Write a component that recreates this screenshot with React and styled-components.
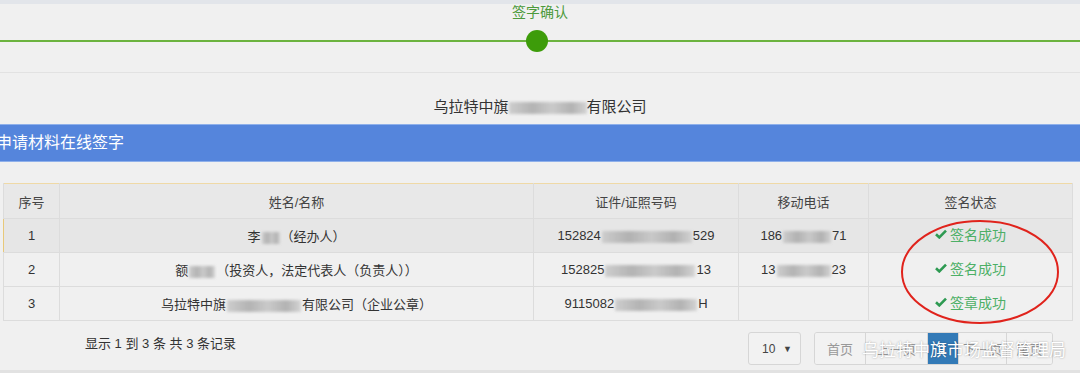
import React from "react";
import styled, { createGlobalStyle } from "styled-components";

const Global = createGlobalStyle`
  html, body { margin: 0; padding: 0; background: #f0f0f0; }
  body {
    font-family: "Liberation Sans", "Noto Sans CJK SC", sans-serif;
    color: #333;
    overflow: hidden;
  }
`;

const Page = styled.div`
  position: relative;
  width: 1080px;
  height: 373px;
  background: #f0f0f0;
  overflow: hidden;
`;

const TopStrip = styled.div`
  height: 4px;
  background: #e2e5ea;
`;

const Steps = styled.div`
  height: 68px;
  border-bottom: 1px solid #e2e2e2;
  display: flex;
  flex-direction: column;
  align-items: center;
`;

const StepLabel = styled.div`
  margin-top: -1px;
  font-size: 14px;
  line-height: 18px;
  color: #4c9a3c;
`;

const Track = styled.div`
  position: relative;
  width: 100%;
  height: 24px;
  margin-top: 8px;
  display: flex;
  align-items: center;
  justify-content: center;
  &::before {
    content: "";
    position: absolute;
    left: 0;
    right: 0;
    top: 11px;
    height: 2px;
    background: #6cb33f;
  }
`;

const Dot = styled.div`
  position: relative;
  width: 22px;
  height: 22px;
  margin-left: -6px;
  border-radius: 50%;
  background: #3d9c0a;
`;

const Company = styled.div`
  height: 51px;
  box-sizing: border-box;
  padding-top: 24px;
  text-align: center;
  font-size: 15px;
  line-height: 20px;
  color: #333;
`;

const Bar = styled.div`
  height: 38px;
  box-sizing: border-box;
  background: #5585dc;
  border-top: 1px solid #8fb0ea;
  border-bottom: 1px solid #8fb0ea;
  color: #fff;
  font-size: 16px;
  line-height: 36px;
  text-indent: -4px;
`;

const TableWrap = styled.div`
  padding: 21px 8px 0 3px;
`;

const Table = styled.table`
  width: 1069px;
  border-collapse: collapse;
  table-layout: fixed;
  font-size: 13px;
  border-top: 1px solid #efd9a6;
`;

const Th = styled.th`
  font-weight: normal;
  height: 34px;
  padding: 0;
  background: #e8e8e8;
  border: 1px solid #dcdcdc;
  border-top: none;
  color: #444;
  text-align: center;
`;

const Row = styled.tr`
  background: ${p => (p.$hover ? "#e6e6e6" : "#f0f0f0")};
  td:first-child {
    border-left: 1px solid ${p => (p.$hover ? "#e8c97a" : "#dcdcdc")};
  }
`;

const Td = styled.td`
  height: 33px;
  padding: 0;
  border: 1px solid #dcdcdc;
  text-align: center;
  color: #333;
  white-space: nowrap;
`;

const Redact = styled.span`
  display: inline-block;
  vertical-align: middle;
  width: ${p => p.$w}px;
  height: 12px;
  margin: 0 ${p => p.$m ?? 1}px;
  background: linear-gradient(90deg, #c8c8c8, #a9a9a9 30%, #c4c4c4 55%, #a8a8a8 80%, #cfcfcf);
  filter: blur(1.5px);
  opacity: 0.85;
`;

const Status = styled.span`
  color: #4caf66;
  font-size: 14px;
  display: inline-flex;
  align-items: center;
  gap: 3px;
  margin-top: -3px;
`;

const Check = () => (
  <svg width="12" height="10" viewBox="0 0 12 10">
    <path d="M1 5.2 L4.3 8.4 L11 1.6" fill="none" stroke="#2e9a52" strokeWidth="2.6" />
  </svg>
);

const Footer = styled.div`
  display: flex;
  align-items: center;
  padding: 11px 0 0 85px;
`;

const Info = styled.div`
  font-size: 13px;
  color: #333;
  margin-top: -12px;
  flex: 1;
`;

const Select = styled.div`
  width: 53px;
  height: 33px;
  box-sizing: border-box;
  border: 1px solid #d6d6d6;
  border-radius: 3px;
  display: flex;
  align-items: center;
  justify-content: space-between;
  padding: 0 8px 0 13px;
  font-size: 12px;
  color: #444;
  margin-right: 13px;
  background: #f2f2f2;
`;

const Pager = styled.div`
  display: flex;
  margin-right: 27px;
  border: 1px solid #d6d6d6;
  border-radius: 3px;
  overflow: hidden;
`;

const PageBtn = styled.div`
  width: ${p => p.$w}px;
  height: 31px;
  box-sizing: border-box;
  border-left: ${p => (p.$first ? "none" : "1px solid #d6d6d6")};
  display: flex;
  align-items: center;
  justify-content: center;
  font-size: 13px;
  color: ${p => (p.$active ? "#fff" : "#999")};
  background: ${p => (p.$active ? "#337ab7" : "#f2f2f2")};
`;

const Watermark = styled.div`
  position: absolute;
  left: 862px;
  top: 340px;
  font-size: 17px;
  line-height: 22px;
  color: #fff;
  text-shadow: 0 0 2px rgba(0, 0, 0, 0.35);
`;

const Circle = styled.svg`
  position: absolute;
  left: 898px;
  top: 217px;
`;

const BottomLine = styled.div`
  position: absolute;
  left: 0;
  right: 0;
  bottom: 0;
  height: 3px;
  background: #e2e2e2;
`;

const rows = [
  { no: 1, name: <>李<Redact $w={18} />（经办人）</>, id: <>152824<Redact $w={90} />529</>, phone: <>186<Redact $w={48} />71</>, status: "签名成功", hover: true },
  { no: 2, name: <>额<Redact $w={26} />（投资人，法定代表人（负责人））</>, id: <>152825<Redact $w={90} />13</>, phone: <>13<Redact $w={54} />23</>, status: "签名成功" },
  { no: 3, name: <>乌拉特中旗<Redact $w={74} />有限公司（企业公章）</>, id: <>9115082<Redact $w={82} />H</>, phone: null, status: "签章成功" },
];

export default function App() {
  return (
    <Page>
      <Global />
      <TopStrip />
      <Steps>
        <StepLabel>签字确认</StepLabel>
        <Track>
          <Dot />
        </Track>
      </Steps>
      <Company>乌拉特中旗<Redact $w={78} $m={0} />有限公司</Company>
      <Bar>申请材料在线签字</Bar>
      <TableWrap>
        <Table>
          <colgroup>
            <col style={{ width: 56 }} />
            <col style={{ width: 474 }} />
            <col style={{ width: 205 }} />
            <col style={{ width: 130 }} />
            <col style={{ width: 204 }} />
          </colgroup>
          <thead>
            <tr>
              <Th>序号</Th>
              <Th>姓名/名称</Th>
              <Th>证件/证照号码</Th>
              <Th>移动电话</Th>
              <Th>签名状态</Th>
            </tr>
          </thead>
          <tbody>
            {rows.map(r => (
              <Row key={r.no} $hover={r.hover}>
                <Td>{r.no}</Td>
                <Td>{r.name}</Td>
                <Td>{r.id}</Td>
                <Td>{r.phone}</Td>
                <Td>
                  <Status><Check />{r.status}</Status>
                </Td>
              </Row>
            ))}
          </tbody>
        </Table>
      </TableWrap>
      <Footer>
        <Info>显示 1 到 3 条 共 3 条记录</Info>
        <Select>
          <span>10</span>
          <span style={{ fontSize: 9 }}>▼</span>
        </Select>
        <Pager>
          <PageBtn $w={50} $first>首页</PageBtn>
          <PageBtn $w={62}>上一页</PageBtn>
          <PageBtn $w={31} $active>1</PageBtn>
          <PageBtn $w={48}>下一页</PageBtn>
          <PageBtn $w={46}>尾页</PageBtn>
        </Pager>
      </Footer>
      <Circle width="164" height="110" viewBox="0 0 164 110">
        <ellipse cx="82" cy="55" rx="78" ry="51" fill="none" stroke="#e0231c" strokeWidth="2" />
      </Circle>
      <Watermark>乌拉特中旗市场监督管理局</Watermark>
      <BottomLine />
    </Page>
  );
}
